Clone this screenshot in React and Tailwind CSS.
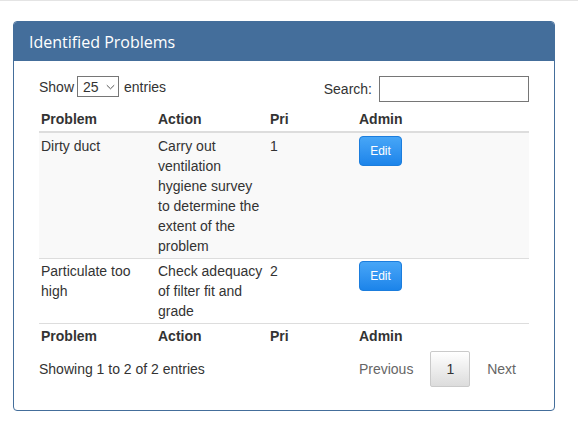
import React from "react";

const rows = [
  {
    problem: "Dirty duct",
    action: "Carry out ventilation hygiene survey to determine the extent of the problem",
    pri: "1",
  },
  {
    problem: "Particulate too high",
    action: "Check adequacy of filter fit and grade",
    pri: "2",
  },
];

function EditButton() {
  return (
    <button
      type="button"
      className="h-[30px] w-[43px] rounded-[4px] border border-[#1b7ddd] bg-linear-to-b from-[#47a6f7] to-[#1b84ea] text-[12px] leading-none text-white"
    >
      Edit
    </button>
  );
}

function HeadRow({ foot }) {
  const cell = foot
    ? "border-t border-[#dddddd] px-[2px] py-[2px] text-left font-bold"
    : "border-b-2 border-[#dddddd] px-[2px] py-[2px] text-left font-bold";
  return (
    <tr>
      <th className={cell}>Problem</th>
      <th className={cell}>Action</th>
      <th className={cell}>Pri</th>
      <th className={cell}>Admin</th>
    </tr>
  );
}

export default function App() {
  return (
    <div className="min-h-[426px] w-[578px] bg-white font-['Liberation_Sans',Arial,sans-serif] text-[14px] leading-5 text-[#333333]">
      <div className="h-px bg-[#e4e4e4]" />
      <div className="ml-[13px] mt-[20px] w-[542px] overflow-hidden rounded-[4px] border border-[#446e9b]">
        <div className="flex h-[39px] items-center bg-[#446e9b] px-[15px] font-['Open_Sans',sans-serif] text-[16px] text-white">
          Identified Problems
        </div>
        <div className="px-[25px] pb-[23px] pt-[15px]">
          <div className="flex h-[26px] items-start justify-between">
            <div className="flex h-[21px] items-center">
              <span>Show</span>
              <div className="ml-[3px] flex h-[21px] w-[42px] items-center justify-between border border-[#767676] pl-[5px] pr-[3px]">
                <span>25</span>
                <svg width="9" height="6" viewBox="0 0 9 6" fill="none">
                  <path d="M0.8 1.2 L4.5 4.8 L8.2 1.2" stroke="#555" strokeWidth="1" />
                </svg>
              </div>
              <span className="ml-[5px]">entries</span>
            </div>
            <div className="flex h-[26px] items-center">
              <span>Search:</span>
              <div className="ml-[7px] h-[26px] w-[150px] border border-[#767676]" />
            </div>
          </div>

          <table className="mt-[5px] w-full table-fixed border-collapse">
            <colgroup>
              <col className="w-[117px]" />
              <col className="w-[112px]" />
              <col className="w-[89px]" />
              <col className="w-[172px]" />
            </colgroup>
            <thead>
              <HeadRow />
            </thead>
            <tbody>
              {rows.map((r, i) => {
                const cell =
                  i === 0
                    ? "border-t border-[#dddddd] px-[2px] pt-[3px] pb-[2px] align-top"
                    : "border-t border-[#dddddd] px-[2px] py-[2px] align-top";
                return (
                  <tr key={r.problem} className={i === 0 ? "bg-[#f9f9f9]" : "bg-white"}>
                    <td className={cell}>{r.problem}</td>
                    <td className={cell}>{r.action}</td>
                    <td className={cell}>{r.pri}</td>
                    <td className={cell}>
                      <EditButton />
                    </td>
                  </tr>
                );
              })}
            </tbody>
            <tfoot>
              <HeadRow foot />
            </tfoot>
          </table>

          <div className="mt-[3px] flex h-[36px] items-center justify-between">
            <span>Showing 1 to 2 of 2 entries</span>
            <div className="flex items-center">
              <span className="border border-transparent px-[14px] py-[7px] text-[#666666]">Previous</span>
              <span className="ml-[2px] rounded-[2px] border border-[#cacaca] bg-linear-to-b from-white to-[#dcdcdc] px-[15px] py-[7px] text-[#333333]">
                1
              </span>
              <span className="ml-[2px] border border-transparent pl-[14px] pr-[12px] py-[7px] text-[#666666]">Next</span>
            </div>
          </div>
        </div>
      </div>
    </div>
  );
}
